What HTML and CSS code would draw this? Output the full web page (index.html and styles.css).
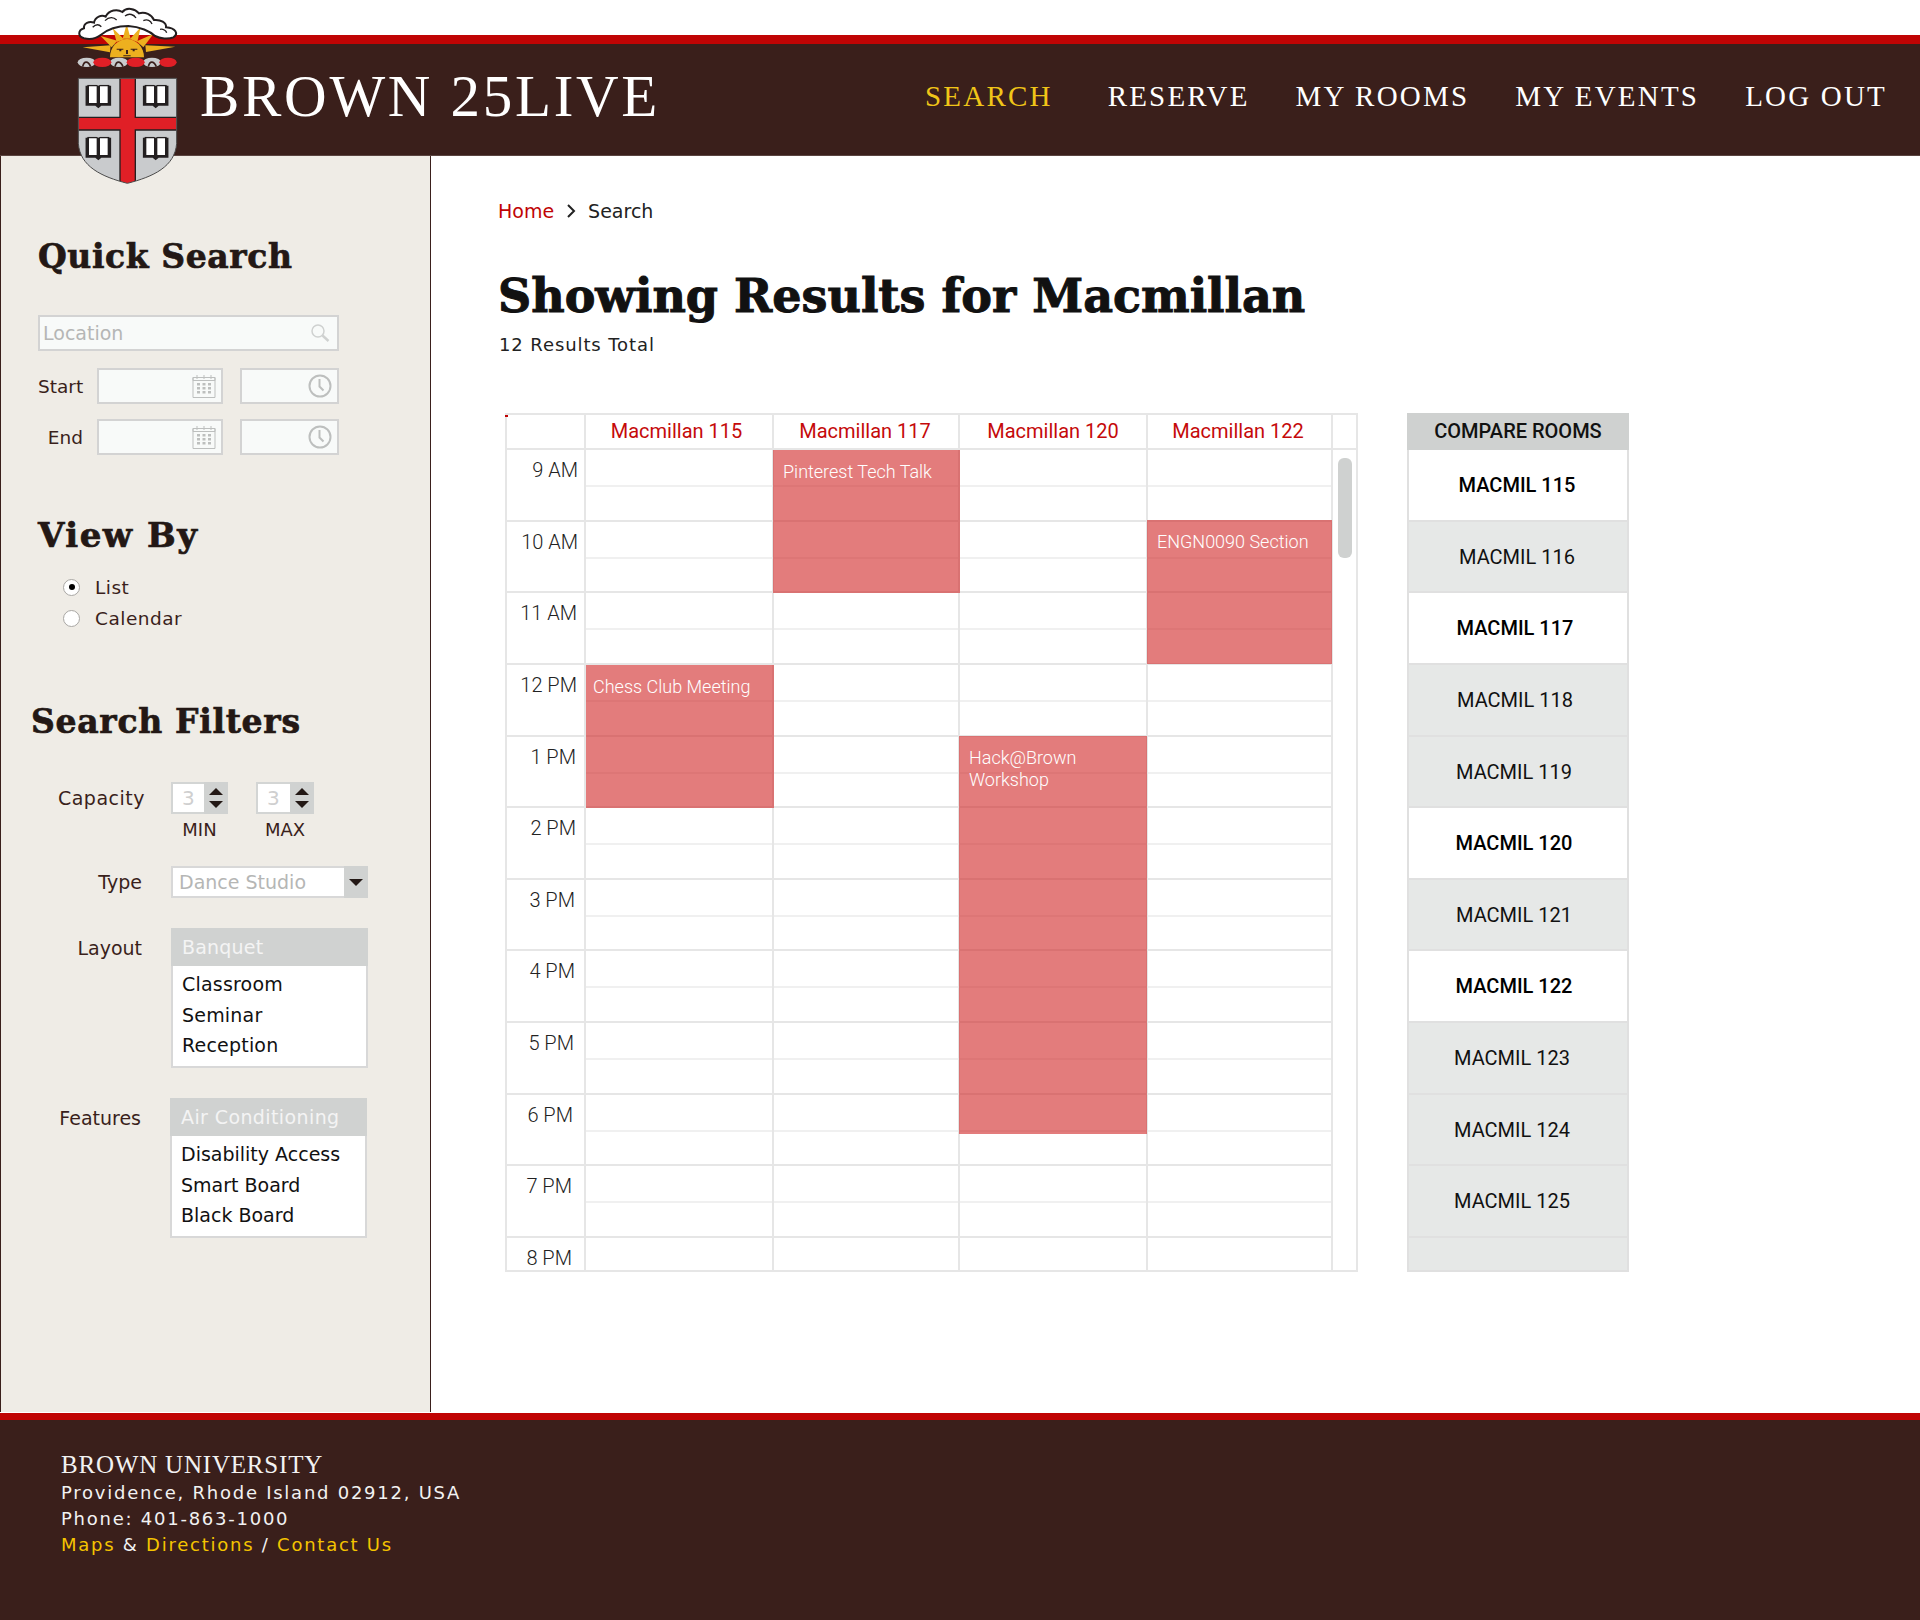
FILE: index.html
```html
<!DOCTYPE html>
<html lang="en">
<head>
  <meta charset="UTF-8">
  <title>Brown 25Live</title>
  <link rel="stylesheet" href="styles.css">
</head>
<body>
  <svg class="sprites" width="0" height="0">
    <symbol id="icon-search" viewBox="0 0 20 20">
      <circle cx="8" cy="8" r="6" fill="none" stroke="currentColor" stroke-width="1.5"/>
      <path d="M12.5 12.5L18.5 18" stroke="currentColor" stroke-width="2.4" fill="none"/>
    </symbol>
    <symbol id="icon-cal" viewBox="0 0 24 24">
      <path d="M1 3.500h22v20h-22z" fill="none" stroke="currentColor" stroke-width="1"/>
      <path d="M1 3.500h22v3h-22zM5 1v4M12 1v4M19 1v4" fill="none" stroke="currentColor" stroke-width="1"/>
      <path d="M5 9h3v2.500h-3zM10.500 9h3v2.500h-3zM16 9h3v2.500h-3zM5 13h3v2.500h-3zM10.500 13h3v2.500h-3zM16 13h3v2.500h-3zM5 17h3v2.500h-3zM10.500 17h3v2.500h-3zM16 17h3v2.500h-3z" fill="currentColor"/>
    </symbol>
    <symbol id="icon-clock" viewBox="0 0 24 24">
      <circle cx="12" cy="12" r="10.500" fill="none" stroke="currentColor" stroke-width="2"/>
      <path d="M11.500 5v7.500l4 4" fill="none" stroke="currentColor" stroke-width="2"/>
    </symbol>
    <symbol id="icon-book" viewBox="0 0 78 72">
      <path d="M0 3h6v-3h27l6 3 6-3h27v3h6v60h-30l-9 8-9-8h-30z" fill="#231f20"/>
      <path d="M11 5h23v50h-23zM44 5h23v50h-23z" fill="#fff"/>
    </symbol>
  </svg>

  <header class="site-header">
    <svg class="logo" viewBox="0 0 390 570" width="130" height="190">
      <defs>
        <clipPath id="shieldClip"><path d="M55 235H350V430C345 500 280 530 202 550C125 530 60 500 55 430Z"/></clipPath>
      </defs>
      <!-- sun -->
      <g fill="#edb01f">
        <path d="M122 108L172 122L155 142Z"/>
        <path d="M158 84L192 118L170 126Z"/>
        <path d="M200 72L212 116L188 116Z"/>
        <path d="M242 82L232 126L210 117Z"/>
        <path d="M280 102L250 142L230 124Z"/>
        <path d="M68 142L152 136L150 157Z"/>
        <path d="M346 140L256 136L258 156Z"/>
      </g>
      <path d="M150 172A50 54 0 0 1 252 172Z" fill="#edb01f"/>
      <path d="M170 146h20v3h-20zM212 146h20v3h-20zM178 149h6v5h-6zM218 149h6v5h-6zM198 150h6v12h-6zM190 166h22v3h-22z" fill="#3a1f1b"/>
      <!-- cloud -->
      <path d="M72 115C52 110 54 90 72 85C70 70 88 62 102 68C105 50 125 43 137 50C147 30 172 26 187 36C200 20 225 26 237 40C255 34 275 44 282 60C302 58 320 68 318 82C348 84 356 102 340 112C325 118 300 116 285 108C270 94 240 80 205 78C170 78 140 90 122 105C106 118 86 118 72 115Z" fill="#fff" stroke="#231f20" stroke-width="6"/>
      <path d="M98 82C108 72 118 74 124 80M135 62C148 48 162 52 170 60M195 48C208 38 222 44 228 54M250 62C262 56 272 62 276 72M300 88C310 86 318 92 320 98" fill="none" stroke="#231f20" stroke-width="4"/>
      <!-- rope -->
      <g fill="#c9cbcd">
        <ellipse cx="80" cy="187" rx="27" ry="14"/>
        <ellipse cx="177" cy="187" rx="27" ry="14"/>
        <ellipse cx="276" cy="187" rx="27" ry="14"/>
      </g>
      <g fill="#e01f26">
        <ellipse cx="127" cy="187" rx="27" ry="14"/>
        <ellipse cx="227" cy="187" rx="27" ry="14"/>
        <ellipse cx="324" cy="187" rx="26" ry="14"/>
      </g>
      <path d="M68 200C72 182 84 182 92 200M165 200C169 182 181 182 189 200M265 200C269 182 281 182 289 200" fill="none" stroke="#3a1f1b" stroke-width="5"/>
      <!-- shield -->
      <path d="M55 235H350V430C345 500 280 530 202 550C125 530 60 500 55 430Z" fill="#c9cbcd"/>
      <use href="#icon-book" x="76" y="254" width="78" height="72"/>
      <use href="#icon-book" x="248" y="254" width="78" height="72"/>
      <use href="#icon-book" x="76" y="410" width="78" height="72"/>
      <use href="#icon-book" x="248" y="410" width="78" height="72"/>
      <g clip-path="url(#shieldClip)">
        <path d="M180 230H226V352H355V390H226V560H180V390H50V352H180Z" fill="#e01f26" stroke="#231f20" stroke-width="4"/>
      </g>
      <path d="M55 235H350V430C345 500 280 530 202 550C125 530 60 500 55 430Z" fill="none" stroke="#4a4a4a" stroke-width="3"/>
    </svg>
    <div class="brand">BROWN 25LIVE</div>
    <nav class="main-nav">
      <a class="active" href="#">SEARCH</a>
      <a href="#">RESERVE</a>
      <a href="#">MY ROOMS</a>
      <a href="#">MY EVENTS</a>
      <a href="#">LOG OUT</a>
    </nav>
  </header>

  <div class="page">
    <aside class="sidebar">
      <h2 class="side-title quick-title">Quick Search</h2>
      <div class="field field-location">
        <input type="text" placeholder="Location">
        <svg class="icon-search"><use href="#icon-search"/></svg>
      </div>
      <div class="date-row">
        <label>Start</label>
        <div class="field field-date"><svg class="icon-cal"><use href="#icon-cal"/></svg></div>
        <div class="field field-time"><svg class="icon-clock"><use href="#icon-clock"/></svg></div>
      </div>
      <div class="date-row date-row-end">
        <label>End</label>
        <div class="field field-date"><svg class="icon-cal"><use href="#icon-cal"/></svg></div>
        <div class="field field-time"><svg class="icon-clock"><use href="#icon-clock"/></svg></div>
      </div>

      <h2 class="side-title view-title">View By</h2>
      <div class="radios">
        <label class="radio-row"><input type="radio" name="view" checked>List</label>
        <label class="radio-row"><input type="radio" name="view">Calendar</label>
      </div>

      <h2 class="side-title filter-title">Search Filters</h2>
      <div class="filter-row capacity-row">
        <label>Capacity</label>
        <div class="spin-group">
          <div class="spin"><span class="spin-val">3</span><span class="spin-btn"><i class="up"></i><i class="down"></i></span></div>
          <span class="spin-cap">MIN</span>
        </div>
        <div class="spin-group spin-max">
          <div class="spin"><span class="spin-val">3</span><span class="spin-btn"><i class="up"></i><i class="down"></i></span></div>
          <span class="spin-cap">MAX</span>
        </div>
      </div>
      <div class="filter-row type-row">
        <label>Type</label>
        <div class="select-box"><span class="select-val">Dance Studio</span><span class="select-btn"><i class="down"></i></span></div>
      </div>
      <div class="filter-row list-row">
        <label>Layout</label>
        <ul class="list-box">
          <li class="selected">Banquet</li>
          <li>Classroom</li>
          <li>Seminar</li>
          <li>Reception</li>
        </ul>
      </div>
      <div class="filter-row list-row features-row">
        <label>Features</label>
        <ul class="list-box">
          <li class="selected">Air Conditioning</li>
          <li>Disability Access</li>
          <li>Smart Board</li>
          <li>Black Board</li>
        </ul>
      </div>
    </aside>

    <main class="content">
      <div class="crumbs">
        <a href="#">Home</a>
        <svg class="crumb-sep" viewBox="0 0 10 16" width="10" height="16"><path d="M2 2l6 6-6 6" fill="none" stroke="#222" stroke-width="2"/></svg>
        <span>Search</span>
      </div>
      <h1 class="results-title">Showing Results for Macmillan</h1>
      <p class="results-count">12 Results Total</p>

      <div class="results">
        <section class="calendar">
          <div class="cal-row cal-head">
            <div class="cal-cell"></div>
            <div class="cal-cell">Macmillan 115</div>
            <div class="cal-cell">Macmillan 117</div>
            <div class="cal-cell">Macmillan 120</div>
            <div class="cal-cell">Macmillan 122</div>
            <div class="cal-gutter"></div>
          </div>
          <div class="cal-body">
            <div class="cal-row hour"><div class="time">9 AM</div><div class="slot"></div><div class="slot"></div><div class="slot"></div><div class="slot"></div></div>
            <div class="cal-row hour"><div class="time">10 AM</div><div class="slot"></div><div class="slot"></div><div class="slot"></div><div class="slot"></div></div>
            <div class="cal-row hour"><div class="time">11 AM</div><div class="slot"></div><div class="slot"></div><div class="slot"></div><div class="slot"></div></div>
            <div class="cal-row hour"><div class="time">12 PM</div><div class="slot"></div><div class="slot"></div><div class="slot"></div><div class="slot"></div></div>
            <div class="cal-row hour"><div class="time">1 PM</div><div class="slot"></div><div class="slot"></div><div class="slot"></div><div class="slot"></div></div>
            <div class="cal-row hour"><div class="time">2 PM</div><div class="slot"></div><div class="slot"></div><div class="slot"></div><div class="slot"></div></div>
            <div class="cal-row hour"><div class="time">3 PM</div><div class="slot"></div><div class="slot"></div><div class="slot"></div><div class="slot"></div></div>
            <div class="cal-row hour"><div class="time">4 PM</div><div class="slot"></div><div class="slot"></div><div class="slot"></div><div class="slot"></div></div>
            <div class="cal-row hour"><div class="time">5 PM</div><div class="slot"></div><div class="slot"></div><div class="slot"></div><div class="slot"></div></div>
            <div class="cal-row hour"><div class="time">6 PM</div><div class="slot"></div><div class="slot"></div><div class="slot"></div><div class="slot"></div></div>
            <div class="cal-row hour"><div class="time">7 PM</div><div class="slot"></div><div class="slot"></div><div class="slot"></div><div class="slot"></div></div>
            <div class="cal-row hour"><div class="time">8 PM</div><div class="slot"></div><div class="slot"></div><div class="slot"></div><div class="slot"></div></div>

            <div class="event ev-pinterest">Pinterest Tech Talk</div>
            <div class="event ev-chess">Chess Club Meeting</div>
            <div class="event ev-hack">Hack@Brown Workshop</div>
            <div class="event ev-engn">ENGN0090 Section</div>
            <div class="scroll-thumb"></div>
          </div>
        </section>

        <section class="compare">
          <div class="compare-head">COMPARE ROOMS</div>
          <div class="compare-list">
            <div class="room on">MACMIL 115</div>
            <div class="room">MACMIL 116</div>
            <div class="room on">MACMIL 117</div>
            <div class="room">MACMIL 118</div>
            <div class="room">MACMIL 119</div>
            <div class="room on">MACMIL 120</div>
            <div class="room">MACMIL 121</div>
            <div class="room on">MACMIL 122</div>
            <div class="room">MACMIL 123</div>
            <div class="room">MACMIL 124</div>
            <div class="room">MACMIL 125</div>
            <div class="room"></div>
          </div>
        </section>
      </div>
    </main>
  </div>

  <footer class="site-footer">
    <div class="foot-name">BROWN UNIVERSITY</div>
    <div>Providence, Rhode Island 02912, USA</div>
    <div>Phone: 401-863-1000</div>
    <div><a href="#">Maps</a> &amp; <a href="#">Directions</a> / <a href="#">Contact Us</a></div>
  </footer>
</body>
</html>
```

FILE: styles.css
```css
* {
  box-sizing: border-box;
}
body {
  margin: 0;
  background-color: #fff;
  color: #2b1a18;
  font-family: "DejaVu Sans", sans-serif;
}
a {
  text-decoration: none;
}
.sprites {
  display: block;
  height: 0;
}

/* header */
.site-header {
  position: relative;
  display: flex;
  align-items: center;
  justify-content: space-between;
  height: 121px;
  margin-top: 35px;
  padding: 0 33px 6px 200px;
  background-color: #3a1f1b;
  border-top: 9px solid #c00404;
  border-bottom: 1px solid #5a4440;
}
.logo {
  position: absolute;
  left: 60px;
  top: -44px;
  z-index: 2;
}
.brand {
  font-family: "Liberation Serif", serif;
  font-size: 59px;
  letter-spacing: 2.700px;
  color: #fff;
  white-space: nowrap;
}
.main-nav {
  display: flex;
  gap: 46px;
}
.main-nav a {
  font-family: "Liberation Serif", serif;
  font-size: 29px;
  letter-spacing: 2.200px;
  color: #fff;
  white-space: nowrap;
}
.main-nav a.active {
  margin-right: 9px;
  color: #f0c518;
}

/* sidebar */
.page {
  display: flex;
  height: 1256px;
}
.sidebar {
  flex: none;
  width: 431px;
  padding: 81px 0 0 37px;
  background-color: #efece6;
  border-left: 1px solid #3a1f1b;
  border-right: 1px solid #3a1f1b;
  color: #3a1f1b;
  font-size: 18.500px;
}
.side-title {
  height: 40px;
  margin: 0;
  font-family: "DejaVu Serif", serif;
  font-size: 33px;
  font-weight: bold;
  line-height: 40px;
  letter-spacing: 0.600px;
  color: #231815;
  -webkit-text-stroke: 0.700px #231815;
}
.view-title {
  margin: 60px 0 0;
  font-size: 34px;
  letter-spacing: 1.500px;
}
.filter-title {
  margin: 68.500px 0 0 -7px;
  letter-spacing: 0.700px;
}
.field {
  display: flex;
  align-items: center;
  justify-content: flex-end;
  height: 36px;
  background-color: #f8faf9;
  border: 2px solid #d3d3d3;
  color: #c4c6c5;
}
.field input {
  flex: 1;
  min-width: 0;
  padding: 0 0 0 3px;
  border: none;
  outline: none;
  background: transparent;
  font-family: inherit;
  font-size: 19px;
}
.field input::placeholder {
  color: #b5b6b5;
}
.field-location {
  width: 301px;
  margin-top: 38px;
  padding-right: 7px;
}
.icon-search {
  width: 20px;
  height: 20px;
  color: #cfd1d0;
}
.date-row {
  display: flex;
  align-items: center;
  margin-top: 17px;
}
.date-row-end {
  margin-top: 15px;
}
.date-row label {
  width: 45px;
  margin-right: 14px;
  text-align: right;
}
.field-date {
  width: 126px;
  padding-right: 5px;
}
.field-time {
  width: 99px;
  margin-left: 17px;
  padding-right: 5px;
}
.icon-cal {
  width: 24px;
  height: 24px;
  color: #bdbfbe;
}
.icon-clock {
  width: 24px;
  height: 24px;
  color: #bdbfbe;
}
.radios {
  margin: 16.500px 0 0 25px;
}
.radio-row {
  display: flex;
  align-items: center;
  height: 31px;
  letter-spacing: 0.500px;
}
.radio-row input {
  appearance: none;
  display: grid;
  place-items: center;
  width: 17px;
  height: 17px;
  margin: 0 15px 0 0;
  background-color: #fff;
  border: 1px solid #a9a7a4;
  border-radius: 50%;
}
.radio-row input:checked::before {
  content: "";
  width: 6px;
  height: 6px;
  border-radius: 50%;
  background-color: #000;
}

/* filters */
.filter-row {
  display: flex;
  margin: 30px 0 0 -37px;
  font-size: 19px;
}
.filter-row label {
  flex: none;
  width: 141px;
  margin-right: 29px;
  text-align: right;
  line-height: 32px;
}
.capacity-row {
  margin-top: 40px;
}
.capacity-row label {
  width: 144px;
  margin-right: 26px;
  letter-spacing: 0.500px;
}
.spin-group {
  display: flex;
  flex-direction: column;
  align-items: center;
  width: 57px;
}
.spin-max {
  width: 58px;
  margin-left: 28px;
}
.spin {
  display: flex;
  width: 100%;
  height: 32px;
  background-color: #fff;
  border: 2px solid #d3d5d4;
}
.spin-val {
  flex: 1;
  padding-left: 9px;
  color: #cfcfcf;
  font-size: 20px;
  line-height: 28px;
}
.spin-btn {
  display: flex;
  flex-direction: column;
  align-items: center;
  justify-content: center;
  gap: 6px;
  width: 24px;
  margin: -2px -2px -2px 0;
  background-color: #d0d2d1;
}
.spin-cap {
  height: 22px;
  margin-top: 5px;
  font-size: 18px;
  line-height: 22px;
}
.up {
  border-left: 7px solid transparent;
  border-right: 7px solid transparent;
  border-bottom: 7px solid #231815;
}
.down {
  border-left: 7px solid transparent;
  border-right: 7px solid transparent;
  border-top: 7px solid #231815;
}
.type-row {
  margin-top: 25px;
}
.select-box {
  display: flex;
  width: 197px;
  height: 32px;
  background-color: #fff;
  border: 2px solid #d8d8d8;
}
.select-val {
  flex: 1;
  padding-left: 6px;
  color: #b5b6b5;
  line-height: 28px;
  white-space: nowrap;
}
.select-btn {
  display: grid;
  place-items: center;
  width: 24px;
  margin: -2px -2px -2px 0;
  background-color: #d0d2d1;
}
.list-box {
  width: 197px;
  height: 140px;
  margin: 0;
  padding: 0;
  list-style: none;
  background-color: #fff;
  border: 2px solid #d8d8d8;
  border-top: none;
  color: #111;
  letter-spacing: 0.200px;
}
.list-box li {
  height: 30.500px;
  padding-left: 9px;
  line-height: 30px;
  white-space: nowrap;
}
.list-box li.selected {
  height: 38px;
  margin: 0 -2px 3px;
  padding-left: 11px;
  background-color: #d0d2d1;
  color: #f4f4f4;
  line-height: 38px;
}
.list-row label {
  line-height: 40px;
}
.features-row {
  margin-left: -38px;
}
.features-row label {
  margin-right: 29px;
  width: 141px;
}
.features-row .list-box {
  letter-spacing: 0;
}
.features-row .list-box .selected {
  letter-spacing: 0.400px;
}

/* results */
.content {
  flex: 1;
  padding: 42px 0 0 67px;
}
.crumbs {
  display: flex;
  align-items: center;
  height: 26px;
  font-size: 19px;
  color: #222;
}
.crumbs a {
  color: #c00404;
}
.crumb-sep {
  margin: 0 12px;
}
.results-title {
  height: 50px;
  margin: 47px 0 0;
  font-family: "DejaVu Serif", serif;
  font-size: 46px;
  font-weight: bold;
  line-height: 50px;
  color: #111;
  white-space: nowrap;
  -webkit-text-stroke: 1px #111;
}
.results-count {
  height: 24px;
  margin: 12px 0 0 1px;
  font-size: 18px;
  line-height: 24px;
  letter-spacing: 0.900px;
  color: #222;
}
.results {
  display: flex;
  gap: 49px;
  margin: 56px 0 0 7px;
  font-family: Roboto, sans-serif;
}

/* calendar */
.calendar {
  position: relative;
  width: 853px;
  border-top: 2px solid #e6e6e6;
  border-left: 2px solid #e6e6e6;
  border-right: 2px solid #e6e6e6;
}
.calendar::before {
  content: "";
  position: absolute;
  left: -2px;
  top: 0;
  width: 3px;
  height: 2px;
  background-color: #c00404;
}
.cal-row {
  display: grid;
  grid-template-columns: 79px 188px 186px 188px 185px;
}
.cal-head {
  grid-template-columns: 79px 188px 186px 188px 185px 23px;
  height: 35px;
  border-bottom: 2px solid #e6e6e6;
}
.cal-cell {
  border-right: 2px solid #e6e6e6;
  color: #c50a0a;
  font-size: 20px;
  line-height: 33px;
  text-align: center;
}
.cal-cell:nth-child(2) {
  padding-right: 5px;
}
.cal-cell:nth-child(3) {
  padding-right: 2px;
}
.cal-cell:nth-child(5) {
  padding-right: 3px;
}
.cal-gutter {
  background-color: #fff;
}
.cal-body {
  position: relative;
  height: 822px;
  overflow: hidden;
  border-bottom: 2px solid #e6e6e6;
}
.hour {
  height: 71.650px;
}
.time {
  padding: 7px 6px 0 0;
  border-right: 2px solid #e6e6e6;
  border-bottom: 2px solid #e6e6e6;
  color: #222;
  font-size: 20px;
  font-weight: 300;
  line-height: 26px;
  text-align: right;
}
.hour:nth-child(n+3) .time {
  padding-right: 7px;
}
.hour:nth-child(n+5) .time {
  padding-right: 8px;
}
.hour:nth-child(n+7) .time {
  padding-right: 9px;
}
.hour:nth-child(n+9) .time {
  padding-right: 10px;
}
.hour:nth-child(n+10) .time {
  padding-right: 11px;
}
.hour:nth-child(n+11) .time {
  padding-right: 12px;
}
.slot {
  border-right: 2px solid #e6e6e6;
  border-bottom: 2px solid #e6e6e6;
  background-image: linear-gradient(#f0f0f0, #f0f0f0);
  background-repeat: no-repeat;
  background-position: 0 35px;
  background-size: 100% 2px;
}
.event {
  position: absolute;
  padding: 11px 10px 0;
  background-color: rgba(206, 30, 30, 0.58);
  color: #fff;
  font-size: 18px;
  font-weight: 300;
  line-height: 22px;
}
.ev-pinterest {
  left: 266px;
  top: 0;
  width: 187px;
  height: 143px;
}
.ev-chess {
  left: 79px;
  top: 215px;
  width: 188px;
  height: 143px;
  padding-left: 7px;
}
.ev-hack {
  left: 452px;
  top: 286px;
  width: 188px;
  height: 398px;
  padding-right: 90px;
}
.ev-engn {
  left: 640px;
  top: 70px;
  width: 185px;
  height: 144px;
}
.scroll-thumb {
  position: absolute;
  right: 4px;
  top: 8px;
  width: 14px;
  height: 100px;
  border-radius: 6px;
  background-color: #cfd1d0;
}

/* compare */
.compare {
  width: 222px;
}
.compare-head {
  height: 37px;
  background-color: #cfd1d0;
  color: #111;
  font-size: 20px;
  font-weight: 500;
  line-height: 37px;
  text-align: center;
}
.compare-list {
  height: 822px;
  overflow: hidden;
  border-bottom: 2px solid #e0e0e0;
}
.room {
  height: 71.650px;
  padding-right: 2px;
  background-color: #e6e8e7;
  border: solid #e0e0e0;
  border-width: 0 2px 2px;
  color: #111;
  font-size: 20px;
  line-height: 71px;
  text-align: center;
}
.room.on {
  background-color: #fff;
  color: #000;
  font-weight: 500;
}
.room:nth-child(n+3) {
  padding-right: 6px;
}
.room:nth-child(n+5) {
  padding-right: 8px;
}
.room:nth-child(n+9) {
  padding-right: 12px;
}

/* footer */
.site-footer {
  height: 207px;
  margin-top: 1px;
  padding: 32px 0 0 61px;
  background-color: #3a1f1b;
  border-top: 7px solid #c00404;
  color: #f2f2f2;
  font-size: 18px;
  line-height: 26px;
  letter-spacing: 1.750px;
}
.foot-name {
  margin-bottom: 2px;
  font-family: "Liberation Serif", serif;
  font-size: 25px;
  letter-spacing: 0.800px;
}
.site-footer a {
  color: #f5c400;
}
```
